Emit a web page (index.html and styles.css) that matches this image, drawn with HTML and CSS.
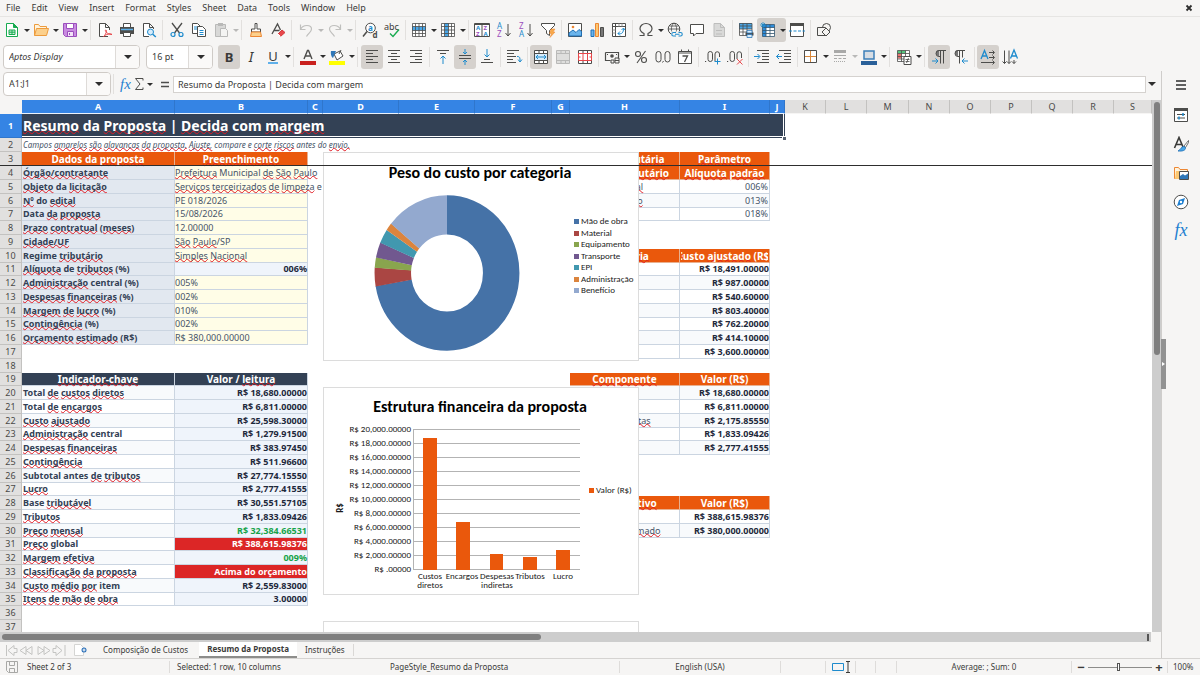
FILE: index.html
```html
<!DOCTYPE html>
<html lang="pt-BR">
<head>
<meta charset="utf-8">
<title>Resumo da Proposta</title>
<link rel="stylesheet" href="styles.css">
</head>
<body>
<nav class="menubar" aria-label="Menu">
  <button>File</button><button>Edit</button><button>View</button><button>Insert</button><button>Format</button><button>Styles</button><button>Sheet</button><button>Data</button><button>Tools</button><button>Window</button><button>Help</button>
  <button class="close" aria-label="Close document"><svg viewBox="0 0 8 8"><path d="M1.500 1.500l5 5M6.500 1.500l-5 5" stroke="#2e2e2e" stroke-width="1.800"/></svg></button>
</nav>

<div class="toolbar" role="toolbar" aria-label="Standard">
  <button class="tb" aria-label="New"><svg viewBox="0 0 16 16"><path d="M2.500 1.500h7l4 4v9h-11z" fill="#fff" stroke="#18ab50"/><path d="M9.500 1.500v4h4z" fill="#18ab50" stroke="#18ab50"/><path d="M5 8h6v4.500H5zM5 10.200h6M8 8v4.500" stroke="#18ab50" fill="#c9eed6"/></svg></button><button class="dd" aria-label="New options"></button>
  <button class="tb" aria-label="Open"><svg viewBox="0 0 16 16"><path d="M1.500 13.500v-11h4l1.500 2h6.500v3" fill="#fff3dc" stroke="#ed9b3c"/><path d="M1.500 13.500l2-7h12l-2 7z" fill="#fcd08c" stroke="#ed9b3c"/></svg></button><button class="dd" aria-label="Open recent"></button>
  <button class="tb" aria-label="Save"><svg viewBox="0 0 16 16"><path d="M1.500 1.500h13v13h-11l-2-2z" fill="#c98be0" stroke="#9b4fbd"/><path d="M4.500 1.500h7v5h-7z" fill="#fff" stroke="#9b4fbd"/><path d="M5.500 9.500h6v5h-6z" fill="#f3e3f8" stroke="#9b4fbd"/><path d="M7.500 11v2" stroke="#9b4fbd"/></svg></button><button class="dd" aria-label="Save options"></button>
  <span class="sep"></span>
  <button class="tb" aria-label="Export as PDF"><svg viewBox="0 0 16 16"><path d="M11 14.500H2.500v-13h6l4 4V8M8.500 1.500v4h4" fill="#fff" stroke="#4d4d4b"/><path d="M6.500 14.500c2-1.500 4-6 2.500-6.500s-.500 4 6 4.500c-2-1.500-6 0-8.500 2z" fill="none" stroke="#e8474b"/></svg></button>
  <button class="tb" aria-label="Print"><svg viewBox="0 0 16 16"><path d="M4.500 5V1.500h7V5" fill="#fff" stroke="#4d4d4b"/><path d="M1 5h14v7H1z" fill="#4d4d4b"/><path d="M2 7.500h12" stroke="#5fb0ea" stroke-width="1.500"/><path d="M4.500 10.500h7v4h-7z" fill="#fff" stroke="#4d4d4b"/></svg></button>
  <button class="tb" aria-label="Print preview"><svg viewBox="0 0 16 16"><path d="M8 14.500H2.500v-13h6l4 4V7M8.500 1.500v4h4" fill="#fff" stroke="#4d4d4b"/><circle cx="9.500" cy="10" r="3" fill="#d7ecfb" stroke="#1e8bcd"/><path d="M11.800 12.200l3 2.800" stroke="#1e8bcd" stroke-width="1.500"/></svg></button>
  <span class="sep"></span>
  <button class="tb" aria-label="Cut"><svg viewBox="0 0 16 16" fill="none"><path d="M3 1l7.500 10M13 1L5.500 11" stroke="#4d4d4b" stroke-width="1.300"/><circle cx="4" cy="12.500" r="2" stroke="#1e8bcd" stroke-width="1.200"/><circle cx="12" cy="12.500" r="2" stroke="#1e8bcd" stroke-width="1.200"/></svg></button>
  <button class="tb" aria-label="Copy"><svg viewBox="0 0 16 16" fill="#fff"><path d="M1.500 1.500h5l2.500 2.500v7.500H1.500z" stroke="#4d4d4b"/><path d="M3 5h4M3 7h4" stroke="#1e8bcd"/><path d="M6.500 4.500h5l3 3v7h-8z" stroke="#4d4d4b"/><path d="M8.500 8.500h4M8.500 10.500h4M8.500 12.500h4" stroke="#1e8bcd"/></svg></button>
  <button class="tb" aria-label="Paste" disabled><svg viewBox="0 0 16 16"><path d="M2.500 2.500h10v12h-10z" fill="#d8d8d7" stroke="#b9b9b8"/><path d="M5 1h5v3H5z" fill="#b9b9b8"/><path d="M7.500 6.500h5l2 2v6h-7z" fill="#f4f4f3" stroke="#b9b9b8"/></svg></button><button class="dd off" aria-label="Paste options" disabled></button>
  <span class="sep"></span>
  <button class="tb" aria-label="Clone formatting"><svg viewBox="0 0 16 16"><path d="M7 1.500h2V7h3.500v3h-9V7H7z" fill="#fff" stroke="#4d4d4b"/><path d="M3.500 10h9l1 4.500H2.500z" fill="#fcd08c" stroke="#ed8733"/></svg></button>
  <button class="tb" aria-label="Clear formatting"><svg viewBox="0 0 16 16" fill="none"><path d="M2 12L7.500 2l3 6M4 8.500h5.500" stroke="#4d4d4b" stroke-width="1.300"/><path d="M8 12l4-4 3 2.500-4.500 4z" fill="#e8474b" stroke="#d43a3e"/><path d="M8 12l2.500 2.500" stroke="#fff"/></svg></button>
  <span class="sep"></span>
  <button class="tb" aria-label="Undo" disabled><svg viewBox="0 0 16 16" fill="none" stroke="#bfbfbd" stroke-width="1.200"><path d="M2.500 2.500v5h5M2.500 7.500C5 2 13.500 2.500 13.500 7c0 3-3 4-5 7.500"/></svg></button><button class="dd off" aria-label="Undo list" disabled></button>
  <button class="tb" aria-label="Redo" disabled><svg viewBox="0 0 16 16" fill="none" stroke="#bfbfbd" stroke-width="1.200"><path d="M13.500 2.500v5h-5M13.500 7.500C11 2 2.500 2.500 2.500 7c0 3 3 4 5 7.500"/></svg></button><button class="dd off" aria-label="Redo list" disabled></button>
  <span class="sep"></span>
  <button class="tb" aria-label="Find and replace"><svg viewBox="0 0 16 16" fill="none"><circle cx="8.500" cy="6" r="4.800" stroke="#4d4d4b" fill="#fff"/><path d="M5 9.500l-4 5" stroke="#4d4d4b" stroke-width="1.500"/><text x="6" y="8.500" font-size="8" font-weight="700" fill="#1e8bcd">a</text><text x="10.500" y="15.500" font-size="8" font-weight="700" fill="#4d4d4b">d</text></svg></button>
  <button class="tb" aria-label="Spelling"><svg viewBox="0 0 16 16" fill="none"><text x="0" y="8" font-size="9" fill="#3a3a38">abc</text><path d="M6 11.500l3 3 6-7" stroke="#18ab50" stroke-width="1.400"/></svg></button>
  <span class="sep tight"></span>
  <button class="tb" aria-label="Row"><svg viewBox="0 0 16 16"><path d="M1.500 1.500h13v13h-13z" fill="#fff"/><path d="M1 4.500h14v4H1z" fill="#4aa7e8"/><path d="M1.500 1.500h13v13h-13zM1.500 4.500h13M1.500 8.500h13M1.500 11.500h13M4.500 1.500v13M8 1.500v13M11.500 1.500v13" fill="none" stroke="#4d4d4b" stroke-width=".8"/></svg></button><button class="dd" aria-label="Row options"></button>
  <button class="tb" aria-label="Column"><svg viewBox="0 0 16 16"><path d="M1.500 1.500h13v13h-13z" fill="#fff"/><path d="M4.500 1h4v14h-4z" fill="#4aa7e8"/><path d="M1.500 1.500h13v13h-13zM1.500 4.500h13M1.500 8h13M1.500 11.500h13M4.500 1.500v13M8.500 1.500v13M11.500 1.500v13" fill="none" stroke="#4d4d4b" stroke-width=".8"/></svg></button><button class="dd" aria-label="Column options"></button>
  <span class="sep tight"></span>
  <button class="tb" aria-label="Sort"><svg viewBox="0 0 16 16"><path d="M.5 1.500h15v13H.5z" fill="#fff" stroke="#4d4d4b"/><path d="M.5 2.500h15M8 2v12" stroke="#4d4d4b"/><g font-size="6" font-weight="700"><text x="2" y="8" fill="#1e8bcd">A</text><text x="2" y="14" fill="#9b4fbd">Z</text><text x="9.500" y="8" fill="#9b4fbd">Z</text><text x="9.500" y="14" fill="#1e8bcd">A</text></g></svg></button>
  <button class="tb" aria-label="Sort ascending"><svg viewBox="0 0 16 16" fill="none"><text x="1" y="7" font-size="8" fill="#1e8bcd">A</text><text x="1" y="15" font-size="8" fill="#9b4fbd">Z</text><path d="M12 2v12M9.500 11l2.500 3 2.500-3" stroke="#4d4d4b"/></svg></button>
  <button class="tb" aria-label="Sort descending"><svg viewBox="0 0 16 16" fill="none"><text x="1" y="7" font-size="8" fill="#9b4fbd">Z</text><text x="1" y="15" font-size="8" fill="#1e8bcd">A</text><path d="M12 2v12M9.500 11l2.500 3 2.500-3" stroke="#4d4d4b"/></svg></button>
  <button class="tb" aria-label="AutoFilter"><svg viewBox="0 0 16 16"><path d="M1.500 1.500h13v2l-5 5v5l-3-2v-3l-5-5z" fill="#fff" stroke="#4d4d4b"/><path d="M11 7h4l-2 3h2l-5 5.500 1.500-4H9.500z" fill="#f7a94a" stroke="#ed8733" stroke-width=".5"/></svg></button>
  <span class="sep tight"></span>
  <button class="tb" aria-label="Insert image"><svg viewBox="0 0 16 16"><path d="M1.500 1.500h13v13h-13z" fill="#fff" stroke="#4d4d4b"/><path d="M2 14V11l4-3 3 2.500 3-3 2.500 2V14z" fill="#6ab4ec" stroke="#1e6fb5"/><circle cx="6" cy="5" r="1.300" fill="#ed8733"/></svg></button>
  <button class="tb" aria-label="Insert chart"><svg viewBox="0 0 16 16"><path d="M2 8h3v6.500H2z" fill="#6ab4ec" stroke="#1e6fb5"/><path d="M6.500 1.500h3v13h-3z" fill="#fcc873" stroke="#ed8733"/><path d="M11.500 5.500h3v9h-3z" fill="#777" stroke="#4d4d4b"/></svg></button>
  <button class="tb" aria-label="Pivot table"><svg viewBox="0 0 16 16"><path d="M1.500 1.500h13v13h-13z" fill="#fff" stroke="#4d4d4b"/><path d="M1.500 4.500h13M4.500 1.500v13" stroke="#4d4d4b"/><path d="M8 1.500v3M11 1.500v3M1.500 8h3M1.500 11h3" stroke="#9a9a98"/><path d="M7 11.500c4 1 5.500-1 5.500-5M10.500 8l2-2 1.500 2M9 9.500l-2 2 2 2" fill="none" stroke="#1e8bcd"/></svg></button>
  <span class="sep tight"></span>
  <button class="tb" aria-label="Special character"><svg viewBox="0 0 16 16"><path d="M1.500 13.500h4.500v-2C3 10 2 8.500 2 6.500a6 5 0 0 1 12 0c0 2-1 3.500-4 5v2h4.500" fill="none" stroke="#4d4d4b" stroke-width="1.200"/></svg></button><button class="dd" aria-label="Special character options"></button>
  <button class="tb" aria-label="Hyperlink"><svg viewBox="0 0 16 16" fill="none"><circle cx="7" cy="7" r="5.800" stroke="#4d4d4b"/><path d="M1 7h12M2.500 4h9M7 1c-3.500 3-3.500 9 0 12M7 1c3.500 3 3.500 9 0 12" stroke="#4d4d4b" stroke-width=".8"/><path d="M4 9.500h12v5H4z" fill="#f5f4f2"/><path d="M9 10.500H6.500a1.600 1.600 0 0 0 0 3.500H9M11.500 10.500h2a1.600 1.600 0 0 1 0 3.500h-2M8 12.200h4.500" stroke="#1e8bcd" stroke-width="1.100"/></svg></button>
  <button class="tb" aria-label="Comment"><svg viewBox="0 0 16 16"><path d="M1.500 2.500h13v9H7L4.500 14v-2.500h-3z" fill="#fff" stroke="#4d4d4b"/></svg></button>
  <button class="tb" aria-label="Headers and footers" disabled><svg viewBox="0 0 16 16"><path d="M3 1.500h6.500l4 4v9H3z" fill="#d9d9d8" stroke="#bdbdbc"/><path d="M9.500 1.500v4h4M5 8.500h6M5 12h6" stroke="#bdbdbc" fill="none"/></svg></button>
  <span class="sep tight"></span>
  <button class="tb" aria-label="Define print area"><svg viewBox="0 0 16 16"><path d="M1.500 1.500h12.500v12h-12.500z" fill="#fff"/><path d="M1 1h13v6H1z" fill="#4aa7e8"/><path d="M1.500 1.500h12.500v12h-12.500zM1.500 4h12.500M1.500 7h12.500M1.500 10h12.500M5 1.500v12M9 1.500v12" fill="none" stroke="#4d4d4b" stroke-width=".8"/><path d="M7.500 10.500h8v3h-8z" fill="#4d4d4b"/><path d="M9 8.500h5V11H9zM9 12.500h5v3H9z" fill="#d7ecfb" stroke="#1e6fb5" stroke-width=".7"/></svg></button>
  <span class="pressed split"><button class="tb" aria-label="Freeze rows and columns" aria-pressed="true"><svg viewBox="0 0 16 16"><path d="M2.500 2.500h12v12h-12z" fill="#fff"/><path d="M2.500 2.500h12v3h-12zM2.500 2.500h3.500v12H2.500z" fill="#2f8ddb"/><path d="M2.500 2.500h12v12h-12zM2.500 5.500h12M2.500 8.500h12M2.500 11.500h12M6 2.500v12M10 2.500v12" fill="none" stroke="#33556f" stroke-width=".8"/><path d="M3 0v6M0 3h6M1 1l4 4M5 1L1 5" stroke="#1e8bcd" stroke-width=".8"/></svg></button><button class="dd" aria-label="Freeze options"></button></span>
  <button class="tb" aria-label="Split window"><svg viewBox="0 0 16 16"><path d="M1.500 2h13v12.500h-13z" fill="#fff" stroke="#4d4d4b"/><path d="M1 1h14v3H1z" fill="#4d4d4b"/><path d="M0 9h16" stroke="#1e8bcd" stroke-dasharray="3 1.500"/></svg></button>
  <span class="sep tight"></span>
  <button class="tb" aria-label="Show draw functions"><svg viewBox="0 0 16 16" fill="#f5f4f2" stroke="#4d4d4b"><circle cx="10.500" cy="5.500" r="4"/><path d="M1.500 5.500h8v8h-8z"/><path d="M10 6l4 4-4 4-4-4z"/></svg></button>
</div>

<div class="toolbar second" role="toolbar" aria-label="Formatting">
  <div class="combo font"><input class="it" aria-label="Font name" value="Aptos Display"><button aria-label="Font list"></button></div>
  <div class="combo size"><input aria-label="Font size" value="16 pt"><button aria-label="Size list"></button></div>
  <button class="tb pressed b" aria-label="Bold" aria-pressed="true">B</button>
  <button class="tb i" aria-label="Italic">I</button>
  <button class="tb ul" aria-label="Underline"><span>U</span></button><button class="dd" aria-label="Underline options"></button>
  <span class="sep"></span>
  <button class="tb" aria-label="Font color"><svg viewBox="0 0 16 16"><path d="M4 10L7.500 1.500h1L12 10M5.500 7h5" fill="none" stroke="#4d4d4b" stroke-width="1.400"/><path d="M0 12h16v4H0z" fill="#c9211e"/></svg></button><button class="dd" aria-label="Font color options"></button>
  <button class="tb" aria-label="Background color"><svg viewBox="0 0 16 16"><path d="M5 5l6-3 3 5-6 4z" fill="#fff" stroke="#4d4d4b"/><path d="M12 1l-2 4" stroke="#4d4d4b"/><path d="M2 2h5L4 9C2 8 1.500 4 2 2z" fill="#2f77b8"/><path d="M0 12h16v4H0z" fill="#ff0"/></svg></button><button class="dd" aria-label="Background color options"></button>
  <span class="sep"></span>
  <button class="tb pressed" aria-label="Align left" aria-pressed="true"><svg viewBox="0 0 16 16" stroke="#4d4d4b"><path d="M2 1.500h12M2 4.500h7M2 7.500h12M2 10.500h7M2 13.500h12"/></svg></button>
  <button class="tb" aria-label="Center"><svg viewBox="0 0 16 16" stroke="#4d4d4b"><path d="M2 1.500h12M5 4.500h6M2 7.500h12M5 10.500h6M2 13.500h12"/></svg></button>
  <button class="tb" aria-label="Align right"><svg viewBox="0 0 16 16" stroke="#4d4d4b"><path d="M2 1.500h12M7 4.500h7M2 7.500h12M7 10.500h7M2 13.500h12"/></svg></button>
  <span class="sep tight"></span>
  <button class="tb" aria-label="Align top"><svg viewBox="0 0 16 16" fill="none"><path d="M2 1.500h12M5 4.500h6" stroke="#4d4d4b"/><path d="M8 15V7M5.500 9.500L8 7l2.500 2.500" stroke="#1e8bcd"/></svg></button>
  <button class="tb pressed" aria-label="Center vertically" aria-pressed="true"><svg viewBox="0 0 16 16" fill="none"><path d="M2 6.500h12M2 9.500h12" stroke="#4d4d4b"/><path d="M8 0v5M6 3l2 2 2-2M8 16v-5M6 13l2-2 2 2" stroke="#1e8bcd"/></svg></button>
  <button class="tb" aria-label="Align bottom"><svg viewBox="0 0 16 16" fill="none"><path d="M2 13.500h12M5 10.500h6" stroke="#4d4d4b"/><path d="M8 0v8M5.500 5.500L8 8l2.500-2.500" stroke="#1e8bcd"/></svg></button>
  <span class="sep tight"></span>
  <button class="tb" aria-label="Wrap text"><svg viewBox="0 0 16 16" fill="none"><path d="M1 1.500h12M1 4.500h7M1 7.500h9M1 10.500h6M1 13.500h9" stroke="#4d4d4b"/><path d="M11 7.500c3 0 3 1 3 5M12 10.500l2 2.500 2-2.500" stroke="#1e8bcd"/></svg></button>
  <span class="sep tight"></span>
  <button class="tb pressed" aria-label="Merge and center" aria-pressed="true"><svg viewBox="0 0 16 16" fill="none"><path d="M1.500 1.500h13v13h-13z" fill="#fff"/><path d="M1.500 4.500h13v7h-13z" fill="#d7ecfb"/><path d="M1.500 1.500h13v13h-13zM1.500 4.500h13M1.500 11.500h13M6 1.500v3M10.500 1.500v3M6 11.500v3M10.500 11.500v3" stroke="#4d4d4b"/><path d="M3 8h10M5 6L3 8l2 2M11 6l2 2-2 2" stroke="#1e8bcd"/></svg></button>
  <button class="tb" aria-label="Merge cells" disabled><svg viewBox="0 0 16 16" fill="none"><path d="M1.500 1.500h13v13h-13zM1.500 4.500h13M1.500 11.500h13M6 1.500v3M10.500 1.500v3M6 11.500v3M10.500 11.500v3" stroke="#b9b9b8" fill="#dededd"/></svg></button>
  <button class="tb" aria-label="Unmerge cells"><svg viewBox="0 0 16 16" fill="none"><path d="M1.500 1.500h13v13h-13zM1.500 4.500h13M1.500 11.500h13M6 1.500v3M10.500 1.500v3M6 11.500v3M10.500 11.500v3" fill="#fff" stroke="#4d4d4b"/><path d="M1.500 4.500h13v7h-13zM6 4.500v7M10.500 4.500v7M1.500 8h2M12.500 8h2" stroke="#e8474b"/></svg></button>
  <span class="sep tight"></span>
  <button class="tb" aria-label="Currency"><svg viewBox="0 0 16 16" fill="none"><path d="M1.500 3.500h13v6M1.500 3.500v8h5" stroke="#4d4d4b" stroke-width="1.200"/><circle cx="8" cy="7" r="1.800" fill="#4d4d4b"/><path d="M3 5.500h1M12 5.500h1M7 11h3v3H7zM11 9h4v5h-4zM11 11.500h4" stroke="#4d4d4b"/></svg></button><button class="dd" aria-label="Currency options"></button>
  <button class="tb" aria-label="Percent"><svg viewBox="0 0 16 16" fill="none" stroke="#4d4d4b" stroke-width="1.100"><circle cx="5" cy="5" r="2.500"/><circle cx="11" cy="11" r="2.500"/><path d="M12.500 2L4 14"/></svg></button>
  <button class="tb" aria-label="Number"><svg viewBox="0 0 16 16" fill="none" stroke="#4d4d4b"><rect x="1" y="2.500" width="5" height="10.500" rx="2.500"/><rect x="10" y="2.500" width="5" height="10.500" rx="2.500"/><path d="M7.500 13.500l1-1.500"/></svg></button>
  <button class="tb" aria-label="Date"><svg viewBox="0 0 16 16" fill="#fff" stroke="#4d4d4b"><path d="M1.500 2.500h13v12h-13z"/><path d="M1.500 4h13M4.500.5v2M11.500.5v2"/><path d="M5.500 7h5l-3 6" fill="none" stroke-width="1.300"/></svg></button>
  <span class="sep"></span>
  <button class="tb" aria-label="Add decimal place"><svg viewBox="0 0 16 16" fill="none" stroke="#4d4d4b"><path d="M0 12.500h1.200"/><rect x="3" y="2.500" width="4.500" height="10" rx="2.200"/><path d="M10 12V5a2.200 2.200 0 0 1 4.500 0v3"/><path d="M12.500 9.500v6M9.500 12.500h6" stroke="#1e8bcd"/></svg></button>
  <button class="tb" aria-label="Delete decimal place"><svg viewBox="0 0 16 16" fill="none" stroke="#4d4d4b"><path d="M0 12.500h1.200"/><rect x="3" y="2.500" width="4.500" height="10" rx="2.200"/><path d="M10 10V5a2.200 2.200 0 0 1 4.500 0v4"/><path d="M10 10l5.500 5.500M15.500 10L10 15.500" stroke="#e8474b"/></svg></button>
  <span class="sep tight"></span>
  <button class="tb" aria-label="Increase indent"><svg viewBox="0 0 16 16" fill="none"><path d="M3 1.500h12M8 4.500h7M8 7.500h7M8 10.500h7M3 13.500h12" stroke="#4d4d4b"/><path d="M0 7.500h5.500M3.500 5l2.500 2.500L3.500 10" stroke="#1e8bcd"/></svg></button>
  <button class="tb" aria-label="Decrease indent"><svg viewBox="0 0 16 16" fill="none"><path d="M3 1.500h12M8 4.500h7M8 7.500h7M8 10.500h7M3 13.500h12" stroke="#4d4d4b"/><path d="M.5 7.500H6M3 5L.5 7.500 3 10" stroke="#1e8bcd"/></svg></button>
  <span class="sep tight"></span>
  <button class="tb" aria-label="Borders"><svg viewBox="0 0 16 16"><path d="M1.500 1.500h12v12h-12z" fill="#fff" stroke="#4d4d4b"/><path d="M7.500 2v11M2 7.500h11" stroke="#d8873a"/></svg></button><button class="dd" aria-label="Border options"></button>
  <button class="tb" aria-label="Border style" disabled><svg viewBox="0 0 16 16" stroke="#a9a9a8"><path d="M2 2.500h12" stroke-width="3"/><path d="M2 6.500h12"/><path d="M2 9.500h12" stroke-dasharray="3 1.500"/><path d="M2 12.500h12" stroke-dasharray="1 1"/></svg></button><button class="dd off" aria-label="Border style options" disabled></button>
  <button class="tb" aria-label="Border color"><svg viewBox="0 0 16 16"><path d="M3 2h10v8H3z" fill="#d7dde4" stroke="#3d7fb8" stroke-width="1.500"/><path d="M0 12h16v4H0z" fill="#2a6099"/></svg></button><button class="dd" aria-label="Border color options"></button>
  <span class="sep"></span>
  <button class="tb" aria-label="Conditional formatting"><svg viewBox="0 0 16 16"><path d="M1.500 1.500h12v11h-12z" fill="#fff"/><path d="M1.500 1.500h8v3h-8z" fill="#56c47d"/><path d="M1.500 4.500h4v5h-4z" fill="#e8736f"/><path d="M1.500 1.500h12v11h-12zM1.500 4.500h12M1.500 7.500h12M1.500 10h12M5.500 1.500v11M9.500 1.500v11" fill="none" stroke="#4d4d4b" stroke-width=".8"/><path d="M8 7.500h7v8H8z" fill="#fff" stroke="#4d4d4b"/><path d="M9.500 10.500h4M9.500 12.500h4M12.500 9l-2 5" stroke="#4d4d4b" stroke-width=".8"/></svg></button><button class="dd" aria-label="Conditional options"></button>
  <span class="sep"></span>
  <button class="tb pressed" aria-label="Left to right" aria-pressed="true"><svg viewBox="0 0 16 16" fill="none"><path d="M8 1a3 3 0 0 0 0 6z" fill="#777"/><path d="M15 1.500H8a3 3 0 0 0 0 6h1.500M9.500 1.500v13M12.500 1.500v13" stroke="#4d4d4b"/><path d="M1 12h6M4.500 9.500L7 12l-2.500 2.500" stroke="#1e8bcd"/></svg></button>
  <button class="tb" aria-label="Right to left"><svg viewBox="0 0 16 16" fill="none"><path d="M5 1a3 3 0 0 0 0 6z" fill="#777"/><path d="M12 1.500H5a3 3 0 0 0 0 6h1.500M6.500 1.500v13M9.500 1.500v7" stroke="#4d4d4b"/><path d="M9 12h6M11.500 9.500L9 12l2.500 2.500" stroke="#1e8bcd"/></svg></button>
  <span class="sep tight"></span>
  <button class="tb pressed" aria-label="Text direction horizontal" aria-pressed="true"><svg viewBox="0 0 16 16" fill="none"><path d="M1 10L4.500 1.500 8 10M2.500 7h4" stroke="#1e8bcd" stroke-width="1.300"/><path d="M9 3.500h5M12.500 1.500l2 2-2 2M9 8.500h5M12.500 6.500l2 2-2 2M1 13.500h13M12.500 11.500l2 2-2 2" stroke="#4d4d4b"/></svg></button>
  <button class="tb" aria-label="Text direction vertical"><svg viewBox="0 0 16 16" fill="none"><path d="M8.500 9.500L12 1l3.500 8.500M9.500 7h5" stroke="#1e8bcd" stroke-width="1.300"/><path d="M2.500 1.500v13M.5 12.500l2 2 2-2M7 1.500v13M5 12.500l2 2 2-2M12 11v3.500M10 12.500l2 2 2-2" stroke="#4d4d4b"/></svg></button>
</div>

<main class="work">
  <section class="doc">
    <div class="formula">
      <div class="combo name"><input aria-label="Name box" value="A1:J1"><button aria-label="Name list"></button></div>
      <span class="sep"></span>
      <button class="tb fx" aria-label="Function wizard">fx</button>
      <button class="sm" aria-label="Sum"><svg viewBox="0 0 10 14"><path d="M9 3.500V1.500H1.500L6 7l-4.500 5.500H9v-2" fill="none" stroke="#4d4d4b"/></svg></button><button class="dd" aria-label="Sum options"></button>
      <button class="tb" aria-label="Formula"><svg viewBox="0 0 16 16"><path d="M4 6.500h8M4 10.500h8" stroke="#4d4d4b" stroke-width="1.600"/></svg></button>
      <input class="line" aria-label="Input line" value="Resumo da Proposta | Decida com margem">
      <button class="more" aria-label="Expand formula bar"></button>
    </div>

    <div class="gridrow">
      <div class="sheet">
        <table>
          <colgroup><col class="c-n"><col class="c-a"><col class="c-b"><col class="c-c"><col class="c-d"><col class="c-d"><col class="c-f"><col class="c-g"><col class="c-h"><col class="c-i"><col class="c-j"><col class="c-k"><col class="c-k"><col class="c-n2"><col class="c-k"><col class="c-k"><col class="c-k"><col class="c-k"><col class="c-k"><col></colgroup>
          <thead><tr><th class="corner"></th><th class="on">A</th><th class="on">B</th><th class="on">C</th><th class="on">D</th><th class="on">E</th><th class="on">F</th><th class="on">G</th><th class="on">H</th><th class="on">I</th><th class="on">J</th><th>K</th><th>L</th><th>M</th><th>N</th><th>O</th><th>P</th><th>Q</th><th>R</th><th>S</th></tr></thead>
          <tbody class="frozen">
            <tr class="title"><th class="on">1</th><td class="big" colspan="10"><u>Resumo</u> da <u>Proposta</u> | <u>Decida</u> com <u>margem</u></td><td colspan="9"></td></tr>
            <tr><th>2</th><td class="note" colspan="19">Campos <u>amarelos</u> <u>são</u> <u>alavancas</u> <u>da</u> <u>proposta.</u> <u>Ajuste,</u> compare e <u>corte</u> <u>riscos</u> antes do <u>envio.</u></td></tr>
            <tr><th>3</th><td class="hd">Dados da <u>proposta</u></td><td class="hd"><u>Preenchimento</u></td><td colspan="5"></td><td class="hd">Regra <u>tributária</u></td><td class="hd"><u>Parâmetro</u></td><td colspan="10"></td></tr>
          </tbody>
          <tbody class="data">
            <tr><th>4</th><td class="k"><u>Órgão/contratante</u></td><td class="y"><u>Prefeitura</u> Municipal <u>de</u> <u>São</u> <u>Paulo</u></td><td colspan="5"></td><td class="hd">Regime <u>tributário</u></td><td class="hd"><u>Alíquota</u> <u>padrão</u></td><td colspan="10"></td></tr>
            <tr><th>5</th><td class="k"><u>Objeto</u> da <u>licitação</u></td><td class="y"><u>Serviços</u> <u>terceirizados</u> <u>de</u> <u>limpeza</u> e <u>c</u></td><td colspan="5"></td><td class="d"><u>Simples</u> <u>Nacional</u></td><td class="d r">006%</td><td colspan="10"></td></tr>
            <tr><th>6</th><td class="k"><u>Nº</u> do <u>edital</u></td><td class="y">PE 018/2026</td><td colspan="5"></td><td class="d">Lucro <u>presumido</u></td><td class="d r">013%</td><td colspan="10"></td></tr>
            <tr><th>7</th><td class="k">Data <u>da</u> <u>proposta</u></td><td class="y">15/08/2026</td><td colspan="5"></td><td class="d"></td><td class="d r">018%</td><td colspan="10"></td></tr>
            <tr><th>8</th><td class="k"><u>Prazo</u> <u>contratual</u> (<u>meses</u>)</td><td class="y">12.00000</td><td colspan="17"></td></tr>
            <tr><th>9</th><td class="k"><u>Cidade/UF</u></td><td class="y"><u>São</u> <u>Paulo</u>/SP</td><td colspan="17"></td></tr>
            <tr><th>10</th><td class="k">Regime <u>tributário</u></td><td class="y"><u>Simples</u> <u>Nacional</u></td><td colspan="5"></td><td class="hd"><u>Categoria</u></td><td class="hd cut"><div><span>Custo <u>ajustado</u> (R$)</span></div></td><td colspan="10"></td></tr>
            <tr><th>11</th><td class="k"><u>Alíquota</u> de <u>tributos</u> (%)</td><td class="v">006%</td><td colspan="5"></td><td class="d"></td><td class="d n">R$ 18,491.00000</td><td colspan="10"></td></tr>
            <tr><th>12</th><td class="k"><u>Administração</u> central (%)</td><td class="y">005%</td><td colspan="5"></td><td class="d"></td><td class="d n">R$ 987.00000</td><td colspan="10"></td></tr>
            <tr><th>13</th><td class="k"><u>Despesas</u> <u>financeiras</u> (%)</td><td class="y">002%</td><td colspan="5"></td><td class="d"></td><td class="d n">R$ 540.60000</td><td colspan="10"></td></tr>
            <tr><th>14</th><td class="k"><u>Margem</u> <u>de</u> <u>lucro</u> (%)</td><td class="y">010%</td><td colspan="5"></td><td class="d"></td><td class="d n">R$ 803.40000</td><td colspan="10"></td></tr>
            <tr><th>15</th><td class="k"><u>Contingência</u> (%)</td><td class="y">002%</td><td colspan="5"></td><td class="d"></td><td class="d n">R$ 762.20000</td><td colspan="10"></td></tr>
            <tr><th>16</th><td class="k"><u>Orçamento</u> <u>estimado</u> (R$)</td><td class="y">R$ 380,000.00000</td><td colspan="5"></td><td class="d"></td><td class="d n">R$ 414.10000</td><td colspan="10"></td></tr>
            <tr><th>17</th><td colspan="7"></td><td class="d"></td><td class="d n">R$ 3,600.00000</td><td colspan="10"></td></tr>
            <tr><th>18</th><td colspan="19"></td></tr>
            <tr><th>19</th><td class="hd navy"><u>Indicador-chave</u></td><td class="hd navy">Valor / <u>leitura</u></td><td colspan="5"></td><td class="hd"><u>Componente</u></td><td class="hd">Valor (R$)</td><td colspan="10"></td></tr>
            <tr><th>20</th><td class="d l">Total <u>de</u> <u>custos</u> <u>diretos</u></td><td class="v">R$ 18,680.00000</td><td colspan="5"></td><td class="d"></td><td class="d n">R$ 18,680.00000</td><td colspan="10"></td></tr>
            <tr><th>21</th><td class="d l">Total <u>de</u> <u>encargos</u></td><td class="v">R$ 6,811.00000</td><td colspan="5"></td><td class="d"></td><td class="d n">R$ 6,811.00000</td><td colspan="10"></td></tr>
            <tr><th>22</th><td class="d l"><u>Custo</u> <u>ajustado</u></td><td class="v">R$ 25,598.30000</td><td colspan="5"></td><td class="d"><u>Despesas</u> <u>indiretas</u></td><td class="d n">R$ 2,175.85550</td><td colspan="10"></td></tr>
            <tr><th>23</th><td class="d l"><u>Administração</u> central</td><td class="v">R$ 1,279.91500</td><td colspan="5"></td><td class="d"></td><td class="d n">R$ 1,833.09426</td><td colspan="10"></td></tr>
            <tr><th>24</th><td class="d l"><u>Despesas</u> <u>financeiras</u></td><td class="v">R$ 383.97450</td><td colspan="5"></td><td class="d"></td><td class="d n">R$ 2,777.41555</td><td colspan="10"></td></tr>
            <tr><th>25</th><td class="d l"><u>Contingência</u></td><td class="v">R$ 511.96600</td><td colspan="17"></td></tr>
            <tr><th>26</th><td class="d l">Subtotal antes <u>de</u> <u>tributos</u></td><td class="v">R$ 27,774.15550</td><td colspan="17"></td></tr>
            <tr><th>27</th><td class="d l"><u>Lucro</u></td><td class="v">R$ 2,777.41555</td><td colspan="17"></td></tr>
            <tr><th>28</th><td class="d l">Base <u>tributável</u></td><td class="v">R$ 30,551.57105</td><td colspan="5"></td><td class="hd"><u>Comparativo</u></td><td class="hd">Valor (R$)</td><td colspan="10"></td></tr>
            <tr><th>29</th><td class="d l"><u>Tributos</u></td><td class="v">R$ 1,833.09426</td><td colspan="5"></td><td class="d"></td><td class="d n">R$ 388,615.98376</td><td colspan="10"></td></tr>
            <tr><th>30</th><td class="d l"><u>Preço</u> <u>mensal</u></td><td class="v green">R$ 32,384.66531</td><td colspan="5"></td><td class="d"><u>Orçamento</u> <u>estimado</u></td><td class="d n">R$ 380,000.00000</td><td colspan="10"></td></tr>
            <tr><th>31</th><td class="d l"><u>Preço</u> global</td><td class="v red">R$ 388,615.98376</td><td colspan="17"></td></tr>
            <tr><th>32</th><td class="d l"><u>Margem</u> <u>efetiva</u></td><td class="v green">009%</td><td colspan="17"></td></tr>
            <tr><th>33</th><td class="d l"><u>Classificação</u> <u>da</u> <u>proposta</u></td><td class="v red">Acima do orçamento</td><td colspan="17"></td></tr>
            <tr><th>34</th><td class="d l"><u>Custo</u> <u>médio</u> <u>por</u> item</td><td class="v">R$ 2,559.83000</td><td colspan="17"></td></tr>
            <tr><th>35</th><td class="d l"><u>Itens</u> <u>de</u> <u>mão</u> <u>de</u> <u>obra</u></td><td class="v">3.00000</td><td colspan="17"></td></tr>
            <tr><th>36</th><td colspan="19"></td></tr>
            <tr><th>37</th><td colspan="19"></td></tr>
          </tbody>
        </table>

        <svg class="chart one" viewBox="0 0 316 209">
          <text class="ct" x="157" y="26">Peso do custo por categoria</text>
          <g transform="translate(124 121) scale(1 1.073) rotate(-90)" fill="none" stroke-width="36.500">
            <circle r="54.200" pathLength="100" stroke="#4572a7" stroke-dasharray="72.300 27.700"/>
            <circle r="54.200" pathLength="100" stroke="#aa4643" stroke-dasharray="3.900 96.100" stroke-dashoffset="-72.240"/>
            <circle r="54.200" pathLength="100" stroke="#89a54e" stroke-dasharray="2.150 97.850" stroke-dashoffset="-76.090"/>
            <circle r="54.200" pathLength="100" stroke="#71588f" stroke-dasharray="3.200 96.800" stroke-dashoffset="-78.200"/>
            <circle r="54.200" pathLength="100" stroke="#4198af" stroke-dasharray="3 97" stroke-dashoffset="-81.340"/>
            <circle r="54.200" pathLength="100" stroke="#db843d" stroke-dasharray="1.650 98.350" stroke-dashoffset="-84.320"/>
            <circle r="54.200" pathLength="100" stroke="#93a9cf" stroke-dasharray="14.060 85.940" stroke-dashoffset="-85.940"/>
          </g>
          <g><rect x="251" y="67" width="5" height="5" fill="#4572a7"/><rect x="251" y="79" width="5" height="5" fill="#aa4643"/><rect x="251" y="90" width="5" height="5" fill="#89a54e"/><rect x="251" y="102" width="5" height="5" fill="#71588f"/><rect x="251" y="113" width="5" height="5" fill="#4198af"/><rect x="251" y="125" width="5" height="5" fill="#db843d"/><rect x="251" y="136" width="5" height="5" fill="#93a9cf"/></g>
          <g class="cl"><text x="258" y="72">Mão de obra</text><text x="258" y="84">Material</text><text x="258" y="95">Equipamento</text><text x="258" y="107">Transporte</text><text x="258" y="118">EPI</text><text x="258" y="130">Administração</text><text x="258" y="141">Benefício</text></g>
        </svg>

        <svg class="chart two" viewBox="0 0 316 208">
          <text class="ct" x="157" y="25">Estrutura financeira da proposta</text>
          <path d="M90 42.500h167M90 56.500h167M90 70.500h167M90 84.500h167M90 98.500h167M90 112.500h167M90 126.500h167M90 140.500h167M90 154.500h167M90 168.500h167M90 182.500h167M90.500 42v141" stroke="#b3b3b3" fill="none"/>
          <path d="M100 51h14v132h-14zM133 135h14v48h-14zM167 167h13v16h-13zM200 170h14v13h-14zM233 163h14v20h-14z" fill="#ea580c"/>
          <g class="cl end"><text x="88" y="45">R$ 20,000.00000</text><text x="88" y="59">R$ 18,000.00000</text><text x="88" y="73">R$ 16,000.00000</text><text x="88" y="87">R$ 14,000.00000</text><text x="88" y="101">R$ 12,000.00000</text><text x="88" y="115">R$ 10,000.00000</text><text x="88" y="129">R$ 8,000.00000</text><text x="88" y="143">R$ 6,000.00000</text><text x="88" y="157">R$ 4,000.00000</text><text x="88" y="171">R$ 2,000.00000</text><text x="88" y="185">R$ .00000</text></g>
          <g class="cl mid"><text x="107" y="192">Custos</text><text x="107" y="201">diretos</text><text x="139" y="192">Encargos</text><text x="174" y="192">Despesas</text><text x="174" y="201">indiretas</text><text x="207" y="192">Tributos</text><text x="240" y="192">Lucro</text><text class="ax" transform="translate(20 121) rotate(-90)">R$</text></g>
          <rect x="266" y="101" width="5" height="5" fill="#ea580c"/><text class="cl" x="273" y="106">Valor (R$)</text>
        </svg>
        <div class="chart three"></div>
        <div class="freeze"></div>
        <div class="handle"></div>
      </div>
      <div class="vscroll"><div></div></div>
    </div>
    <div class="hscroll"><div></div><i></i></div>
    <div class="tabs">
      <span class="navs"><svg viewBox="0 0 62 14" fill="none" stroke="#c4c4c2"><path d="M1.500 2v11M3 7.500l6-5v3h3v4H9v3zM15 7.500l6-4v8zM21 7.500l6-4v8zM45 7.500l-6-4v8zM39 7.500l-6-4v8zM57 7.500l-6-5v3h-3v4h3v3zM60 2v11"/></svg></span>
      <button class="add" aria-label="Add sheet"><svg viewBox="0 0 14 14"><path d="M1.500 1.500h6l3 3v8h-9z" fill="#fff" stroke="#d5d5d3"/><circle cx="11" cy="7" r="2.500" fill="#2a6fb8"/><path d="M9.500 7h3M11 5.500v3" stroke="#fff"/></svg></button>
      <button class="tab">Composição de Custos</button><button class="tab active">Resumo da Proposta</button><button class="tab">Instruções</button><span class="tabend"></span>
    </div>
  </section>
  <aside class="side">
    <span class="grip"></span>
    <button aria-label="Sidebar settings"><svg viewBox="0 0 16 16"><path d="M3 3h10M3 7h10M3 11h10" stroke="#2e2e2e" stroke-width="1.600"/></svg></button>
    <button aria-label="Properties"><svg viewBox="0 0 16 16"><path d="M1.500 2.500h13v12h-13z" fill="#fff" stroke="#4d4d4b"/><path d="M1 1h14v3H1z" fill="#4d4d4b"/><path d="M4 7.500h8M4 11h8" stroke="#4d4d4b"/><path d="M10 6v3M6 9.500v3" stroke="#1e8bcd" stroke-width="1.500"/></svg></button>
    <button aria-label="Styles"><svg viewBox="0 0 16 16" fill="none"><path d="M1.500 12L6 1.500 10 11M3 8.500h6" stroke="#3a3a38" stroke-width="1.600"/><path d="M15.500 4.500L11 10l1.500 1.500 3-5z" fill="#fff" stroke="#4d4d4b" stroke-width=".8"/><path d="M11 10.500c-3 0-3 3-6 4.500 4 .5 8-.5 7.500-3.500z" fill="#4aa7e8" stroke="#1e6fb5" stroke-width=".8"/></svg></button>
    <button aria-label="Gallery"><svg viewBox="0 0 16 16"><path d="M1.500 13.500v-11h4l1.500 2h7.500v9z" fill="#fff3dc" stroke="#ed8733"/><path d="M3 6h12v8H2z" fill="#fcc873"/><path d="M6.500 6.500h9v8h-9z" fill="#fff" stroke="#4d4d4b"/><path d="M7 14v-3l3-2 2 1.500 3-2V14z" fill="#2f77b8"/></svg></button>
    <button aria-label="Navigator"><svg viewBox="0 0 16 16"><circle cx="8" cy="8" r="6.800" fill="#fff" stroke="#4d4d4b"/><path d="M12 4l-2 6-6 2 2-6z" fill="#1e7fd0"/><circle cx="8" cy="8" r="1.200" fill="#fff"/></svg></button>
    <button class="fx" aria-label="Functions">fx</button>
  </aside>
</main>

<footer class="status">
  <span class="first"><svg viewBox="0 0 12 12" fill="none" stroke="#a8a8a6"><path d="M.5.5h11v11h-9l-2-2zM3.500.5v4h5v-4M3.500 11.500v-4h5v4"/></svg>Sheet 2 of 3</span><span>Selected: 1 row, 10 columns</span><span class="plain">PageStyle_Resumo da Proposta</span><span class="c">English (USA)</span><span></span><span class="c"><svg class="sel" viewBox="0 0 20 12" fill="none"><path d="M1.500 2.500h11v7h-11z" stroke="#1e8bcd"/><path d="M15 .5h4M15 11.500h4M17 .5v11" stroke="#3a3a38"/></svg></span><span></span><span></span><span class="c">Average: ; Sum: 0</span><span class="zoom"><button aria-label="Zoom out">−</button><input type="range" min="0" max="100" value="48" aria-label="Zoom"><button aria-label="Zoom in">+</button></span><span class="pct">100%</span>
</footer>
</body>
</html>
```
FILE: styles.css
```css
* { box-sizing: border-box; }
body {
  margin: 0;
  height: 100vh;
  display: flex;
  flex-direction: column;
  overflow: hidden;
  background: #f6f5f4;
  color: #3a3a38;
  font: 9px/12px "Noto Sans", "Open Sans", sans-serif;
}
button, input { font: inherit; color: inherit; }
button { border: 0; background: none; padding: 0; }
svg { display: block; }
svg text { font-family: "Noto Sans", sans-serif; }

.menubar {
  display: flex;
  align-items: center;
  height: 17px;
  flex: none;
  padding-left: 1px;
  border-bottom: 1px solid #e6e5e3;
}
.menubar button { padding: 0 6px 0 5px; height: 16px; }
.menubar .close { margin-left: auto; padding: 0 7px; }
.close svg { width: 8px; height: 8px; }

.toolbar {
  display: flex;
  align-items: center;
  height: 27px;
  flex: none;
  padding: 0 0 1px 1px;
}
.second { padding-bottom: 2px; }
.tb {
  width: 22px;
  height: 24px;
  flex: none;
  display: flex;
  align-items: center;
  justify-content: center;
  border-radius: 3px;
}
.tb svg { width: 16px; height: 16px; overflow: visible; }
.pressed { background: #d5d1cd; border-radius: 3px; }
.split { display: flex; align-items: center; }
.dd { width: 7px; height: 22px; flex: none; position: relative; }
.dd::after, .combo button::after, .more::after {
  content: "";
  display: block;
  margin: auto;
  width: 0;
  border: 4px solid transparent;
  border-top-color: #2e2e2e;
  border-bottom: 0;
}
.dd::after { border-width: 3px; border-bottom: 0; margin-left: 1px; }
.dd.off::after { border-top-color: #b9b9b8; }
.sep { width: 6px; flex: none; height: 20px; }
.sep::after { content: ""; display: block; width: 1px; height: 100%; margin-left: 2px; background: #e2e0de; }
.sep.tight { width: 5px; }

.combo {
  display: flex;
  height: 24px;
  border: 1px solid #cfcbc7;
  border-radius: 4px;
  background: #fff;
  overflow: hidden;
  flex: none;
}
.combo input { border: 0; background: none; padding: 0 5px; min-width: 0; flex: 1; outline: 0; }
.combo button { width: 24px; border-left: 1px solid #dedbd8; background: #faf9f8; }
.combo .it { font-style: italic; }
.font { width: 137px; margin: 0 6px 0 2px; }
.size { width: 67px; margin-right: 5px; }
.name { width: 108px; margin-left: 3px; }
.b { font-size: 13px; font-weight: 700; }
.i { font: italic 14px "Noto Sans", sans-serif; }
.ul { font-size: 13px; }
.ul span { border-bottom: 2px solid #5fb0ea; line-height: 12px; }
.fx { font: italic 15px "Liberation Serif", serif; color: #1e7fd0; }

.work { flex: 1; display: flex; min-height: 0; }
.doc { flex: 1; min-width: 0; display: flex; flex-direction: column; }
.formula { height: 29px; flex: none; display: flex; align-items: center; padding-bottom: 3px; }
.formula .fx { width: 19px; }
.sm { width: 11px; flex: none; }
.sm svg { width: 10px; height: 14px; }
.formula .dd { margin: 0 3px 0 1px; }
.formula .tb { width: 17px; }
.line {
  flex: 1;
  min-width: 0;
  height: 17px;
  padding: 0 4px;
  border: 1px solid #d5d2cf;
  background: #fff;
  outline: 0;
}
.more { width: 15px; padding-right: 4px; }

.gridrow { flex: 1; min-height: 0; display: flex; }
.sheet { flex: 1; min-width: 0; position: relative; overflow: hidden; background: #fff; }
table { width: 100%; table-layout: fixed; border-collapse: separate; border-spacing: 0; }
.c-n { width: 22px; } .c-a { width: 153px; } .c-b { width: 133px; } .c-c { width: 15px; }
.c-d { width: 76px; } .c-f { width: 77px; } .c-g { width: 18px; } .c-h { width: 110px; }
.c-i { width: 90px; } .c-j { width: 15px; } .c-k { width: 41px; } .c-n2 { width: 42px; }
tr { height: 14px; }
.data tr:nth-child(4n) { height: 13px; }
.title { height: 24px; }
th, td { padding: 0 1px; line-height: 12px; white-space: nowrap; text-align: left; vertical-align: middle; color: #475569; }
th {
  padding: 0;
  text-align: center;
  font-weight: 400;
  color: #4a4a48;
  background: #e1e0df;
  border-right: 1px solid #c3c2c0;
  border-bottom: 1px solid #c3c2c0;
}
thead th { border-bottom-color: #f6f5f4; }
th.on { background: #3584e4; color: #fff; font-weight: 700; border-color: #2f76cc; }
thead th.on { border-bottom-color: #eaf2fc; }
th.corner { background: #f6f5f4; border-color: #f6f5f4; }
u {
  text-decoration: underline wavy #e01b24 1px;
  text-decoration-skip-ink: none;
  text-underline-offset: -1px;
}
.big {
  background: #334155;
  color: #fff;
  font-size: 14px;
  font-weight: 700;
  line-height: 20px;
  border: 1px solid #334155;
  border-width: 0 1px 1px 0;
  box-shadow: inset -1px -1px #fff;
}
.note { font-size: 8px; font-style: italic; }
.hd {
  background: #ea580c;
  color: #fff;
  font-size: 10px;
  font-weight: 700;
  text-align: center;
  border-right: 1px solid #e8b08f;
  border-bottom: 1px solid #e8b08f;
}
.navy { background: #334155; border-color: #cbd5e1; }
.k, .y, .v, .d { border-right: 1px solid #cbd5e1; border-bottom: 1px solid #cbd5e1; }
.k { background: #e2e8f0; color: #334155; font-weight: 700; }
.y { background: #fffde7; padding-left: 0; }
.v { background: #eff4fb; color: #1e293b; font-weight: 700; text-align: right; padding-right: 0; }
.data tr:nth-child(odd) .d { background: #f8fafc; }
.l { color: #334155; font-weight: 700; }
.r { text-align: right; padding-right: 1px; }
.n { color: #1e293b; font-weight: 700; text-align: right; padding-right: 0; }
.green { color: #16a34a; }
.red { background: #dc2626; color: #fff; }
.cut div { position: relative; display: flex; justify-content: center; overflow: hidden; }
.cut div::before { content: ""; position: absolute; left: 0; top: 4px; border: 2px solid transparent; border-right: 3px solid #fca5a5; border-left: 0; }

.chart { position: absolute; left: 323px; width: 316px; background: #fff; outline: 1px solid #dcdcdc; outline-offset: -1px; }
.one { top: 52px; height: 209px; }
.two { top: 287px; height: 208px; }
.three { top: 521px; height: 208px; }
.chart .ct { font: 700 16px Carlito, Lato, sans-serif; text-anchor: middle; fill: #000; }
.chart .cl, .chart .cl text { font: 9px Carlito, Lato, sans-serif; fill: #1a1a1a; }
.end { text-anchor: end; }
.mid { text-anchor: middle; }
.chart .cl .ax { font-weight: 700; }
.freeze { position: absolute; left: 0; right: 0; top: 65px; height: 1px; background: #2e2e2e; }
.handle { position: absolute; left: 782px; top: 36px; width: 4px; height: 4px; background: #55606f; border: 1px solid #fff; border-width: 1px 0 0 1px; }

.vscroll { width: 9px; flex: none; background: #cdcdcd; padding: 2px; }
.vscroll div { width: 6px; height: 48%; border-radius: 3px; background: #7f7f7f; }
.hscroll { height: 10px; flex: none; background: #cdcdcd; padding: 2px; display: flex; justify-content: space-between; margin-right: 10px; }
.hscroll div { width: 47%; height: 6px; border-radius: 3px; background: #7f7f7f; }
.hscroll i { width: 2px; height: 7px; background: #555; }

.tabs { height: 16px; flex: none; display: flex; align-items: center; padding-left: 5px; font-size: 8px; }
.navs svg { width: 62px; height: 14px; }
.add { margin: 0 6px 0 6px; }
.add svg { width: 14px; height: 14px; }
.tab { height: 16px; padding: 0 11px 0 10px; }
.tab.active { background: #fff; font-weight: 700; border-bottom: 2px solid #8d8d8b; padding: 0 8px; }
.tab.active + .tab { padding: 0 8px; }
.tabend { width: 1px; height: 12px; background: #dad8d6; }

.side {
  width: 39px;
  flex: none;
  position: relative;
  border-left: 1px solid #cfcdcb;
  display: flex;
  flex-direction: column;
  align-items: center;
}
.side button { width: 24px; height: 29px; display: flex; align-items: center; justify-content: center; }
.side svg { width: 16px; height: 16px; }
.side .fx { font-size: 18px; }
.grip { position: absolute; left: -1px; top: 268px; width: 5px; height: 50px; background: #929292; }
.grip::after { content: ""; position: absolute; left: 1px; top: 23px; border: 2px solid transparent; border-left: 3px solid #fff; border-right: 0; }

.status {
  height: 17px;
  flex: none;
  display: grid;
  grid-template-columns: 170fr 213fr 237fr 161fr 45fr 30fr 20fr 21fr 175fr 96fr 32fr;
  align-items: center;
  border-top: 1px solid #d5d3d1;
  font-size: 8px;
}
.status > span { min-width: 0; display: flex; align-items: center; height: 12px; padding-left: 7px; border-right: 1px solid #dedcda; }
.status > span:nth-child(2) { border-right: 0; }
.status .c { justify-content: center; padding: 0; }
.status > .first { padding-left: 6px; gap: 9px; }
.status > .pct { padding-left: 5px; border: 0; }
.first svg { width: 12px; height: 12px; }
.status .sel { width: 20px; height: 12px; }
.status > .zoom { gap: 3px; padding: 0 4px 0 5px; }
.zoom button { width: 8px; flex: none; font: 700 13px/12px "Noto Sans", sans-serif; }
.zoom input { flex: 1; width: 0; min-width: 0; margin: 0; height: 12px; appearance: none; background: linear-gradient(#8d8d8b, #8d8d8b) center / 100% 1px no-repeat; }
.zoom input::-webkit-slider-thumb { appearance: none; width: 3px; height: 8px; background: #fff; border: 1px solid #555; }
```
